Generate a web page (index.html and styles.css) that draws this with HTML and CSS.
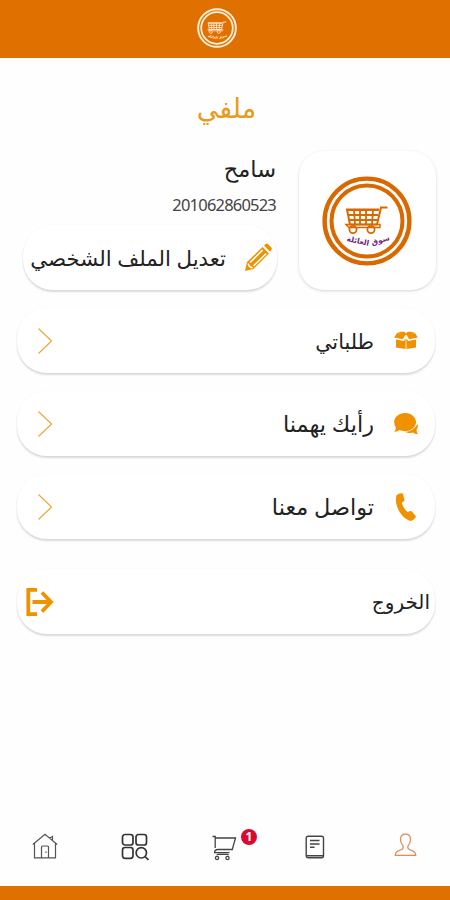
FILE: index.html
```
<!DOCTYPE html>
<html lang="ar" dir="rtl">
<head>
    <meta charset="UTF-8">
    <meta name="viewport" content="width=device-width, initial-scale=1.0">
    <title>ملفي</title>
    <link rel="stylesheet" href="styles.css">
</head>
<body>
    <svg class="defs">
        <symbol id="chevron" viewBox="0 0 16 28">
            <path d="M1.500 1.500l13 12.500-13 12.500" fill="none" stroke="currentColor" stroke-width="1.200"/>
        </symbol>
        <symbol id="logo" viewBox="0 0 90 90">
            <g fill="none" stroke="currentColor">
                <circle cx="45" cy="45" r="42.4" stroke-width="4.400"/>
                <circle cx="45" cy="45" r="35.5" stroke-width="4"/>
                <path d="M65.500 31.500h-6.500l-4 17H28l-3-15h32" stroke-width="2"/>
                <path d="M25 34h32M26 39h30M27 44h29M32 34l1 14M38 34v14M44 34v14M51 34l-1 14" stroke-width="1.800"/>
                <path d="M24 48.500h34v3H27z" stroke-width="1.500"/>
                <circle cx="31" cy="53.500" r="3.600" stroke-width="1.800"/>
                <circle cx="49" cy="53.500" r="3.600" stroke-width="1.800"/>
            </g>
        </symbol>
    </svg>

    <header class="topbar">
        <svg class="topbar-logo" viewBox="0 0 90 90">
            <use href="#logo"/>
            <g class="logo-text">
                <text x="59" y="66.500" transform="rotate(-16 59 66)">سوق</text>
                <text x="35.500" y="67.500" transform="rotate(12 35.500 67)">العائلة</text>
            </g>
        </svg>
    </header>

    <main class="page">
        <h1>ملفي</h1>

        <section class="profile">
            <div class="avatar">
                <svg viewBox="0 0 90 90">
                    <use href="#logo"/>
                    <g class="logo-text">
                        <text x="59" y="66.500" transform="rotate(-16 59 66)">سوق</text>
                        <text x="35.500" y="67.500" transform="rotate(12 35.500 67)">العائلة</text>
                    </g>
                </svg>
            </div>
            <div class="profile-info">
                <div class="name">سامح</div>
                <div class="phone">201062860523</div>
                <a class="card edit">
                    <svg class="pencil" viewBox="0 0 28 29">
                        <path d="M1 28l2-9L18.500 4l6.500 6.500L9.500 26z" fill="#f09100"/>
                        <path d="M20 2.500l1.500-1.500q1.500-1 3 .5l2.500 2.500q1.500 1.500.3 3L26 8.800z" fill="#f09100"/>
                        <path d="M6 19.500L18.700 7M9.500 23L22.200 10.500M4 20.500l1.500 3 3 1.500" fill="none" stroke="#fff" stroke-width="1.600"/>
                    </svg>
                    <span>تعديل الملف الشخصي</span>
                </a>
            </div>
        </section>

        <nav class="menu">
            <a class="card row">
                <svg class="row-icon" viewBox="0 0 24 28" fill="#f09100">
                    <path d="M3 6l8.500 1.200L9 12.300.2 10.500zM21 6l-8.500 1.200 2.500 5.100 8.800-1.800zM2 12.500l7.700 1.500 1.900-2.800v10.700L2 20.500zM22 12.500L14.300 14l-1.900-2.800v10.700l9.600-1.400z"/>
                    <path d="M3 6l4-1.200h3.500L12 6.500l1.500-1.700H17L21 6l-9 2.200z"/>
                </svg>
                <span class="orders">طلباتي</span>
                <svg class="arrow"><use href="#chevron"/></svg>
            </a>
            <a class="card row">
                <svg class="row-icon" viewBox="0 0 24 28" fill="#f09100">
                    <path d="M11 3c6.200 0 11 4 11 9s-4.800 9.200-11 9.200c-2 0-3.800-.5-5.400-1.200Q3.500 22 .3 21.800 2 19.800 1.800 17.200A8.500 8.500 0 0 1 .2 12C.2 7 5 3 11 3z"/>
                    <path d="M23.500 14q1 3-1 6 0 2.500 1.500 4-3 .2-5-1.600-5 1.200-8-.3Q19.500 21 23.500 14z"/>
                </svg>
                <span class="opinion">رأيك يهمنا</span>
                <svg class="arrow"><use href="#chevron"/></svg>
            </a>
            <a class="card row">
                <svg class="row-icon" viewBox="0 0 24 28" fill="#f09100">
                    <path d="M2.500 2.200Q5 0 7.800.3q1 0 1.300 1l1.300 5.500q.2 1-.6 1.500L7.700 9.700q1.500 5.500 5.800 9.300l2.700-1q1-.3 1.600.5l3.700 4.300q.7.900 0 1.700-2 3.200-5 3.400C9.500 26.500 2.500 17 2 8q-.2-4 .5-5.800z"/>
                </svg>
                <span class="contact">تواصل معنا</span>
                <svg class="arrow"><use href="#chevron"/></svg>
            </a>
            <a class="card row logout">
                <span>الخروج</span>
                <svg class="logout-icon" viewBox="0 0 28 30" fill="none" stroke="#f09100" stroke-width="3.800">
                    <path d="M11 2.800H2.300v24.400H11M6.500 15h18M16 5.500l9 9.500-9 9.500"/>
                </svg>
            </a>
        </nav>
    </main>

    <footer class="tabbar">
        <a class="tab">
            <svg class="person" viewBox="0 0 24 26" fill="none" stroke="#e08a5e" stroke-width="1.300">
                <path d="M12 1.200c3.500 0 5.200 2.300 5.200 5.500 0 2.800-1 5-2.600 6.600-.6 2.500-.3 3.200 1.500 3.900l4 1.600q2.300 1 2.600 4.400H1.300q.3-3.400 2.600-4.400l4-1.600c1.800-.7 2.100-1.400 1.500-3.900C7.800 11.700 6.800 9.500 6.800 6.700c0-3.200 1.700-5.500 5.200-5.500z"/>
            </svg>
        </a>
        <a class="tab">
            <svg class="doc" viewBox="0 0 20 24" fill="none" stroke="#444" stroke-width="1.400">
                <rect x="1.200" y="1.200" width="17.300" height="21.600" rx="2"/>
                <path d="M1.500 20.800h17M5 5.500h9.500M5 9h9.500M5 12.300h4.500"/>
            </svg>
        </a>
        <a class="tab">
            <svg class="cart" viewBox="0 0 26 26" fill="none" stroke="#444" stroke-width="1.300">
                <path d="M.5 1.500h2.700v11.500M3.500 3h20l-3.200 11.500H6q-3.500 0-3.500 3.200h15M5 20.300q0-1 1-1h9q1.500 0 1.500 1"/>
                <circle cx="5" cy="23" r="1.600"/>
                <circle cx="15.500" cy="23" r="1.600"/>
            </svg>
            <span class="badge">1</span>
        </a>
        <a class="tab">
            <svg class="grid" viewBox="0 0 28 28" fill="none" stroke="#333" stroke-width="1.700">
                <rect x="1.500" y="1.500" width="10.500" height="10.500" rx="2.500"/>
                <rect x="15" y="1.500" width="10.500" height="10.500" rx="2.500"/>
                <rect x="1.500" y="14.500" width="10.500" height="10.800" rx="2.500"/>
                <circle cx="20.300" cy="19.800" r="5.200"/>
                <path d="M24 23.500l3.500 3.500"/>
            </svg>
        </a>
        <a class="tab">
            <svg class="home" viewBox="0 0 26 26" fill="none" stroke="#555" stroke-width="1.200">
                <path d="M2.500 10.500v14.300h21V10.500M.8 11.500L13 1.200l12.200 10.300M17.500 5l3-1.500v4M9.500 24.500V14q0-1 1-1h5q1 0 1 1v10.500M14 18.500v1.500"/>
            </svg>
        </a>
    </footer>
</body>
</html>
```
FILE: styles.css
```
* {
    box-sizing: border-box;
}
body {
    margin: 0;
    height: 900px;
    display: flex;
    flex-direction: column;
    background: #fefefe;
    color: #222;
    font-family: "Noto Sans", "DejaVu Sans", sans-serif;
    font-size: 20px;
    overflow: hidden;
}
svg {
    display: block;
    flex-shrink: 0;
}
.defs {
    display: none;
}
.topbar {
    height: 58px;
    padding: 8px 16px 0 0;
    display: flex;
    justify-content: center;
    background: #e07000;
}
.topbar-logo {
    width: 40px;
    height: 40px;
    color: #fff0d8;
}
.logo-text {
    fill: #75257e;
    font-size: 7.5px;
    font-weight: bold;
    text-anchor: middle;
}
.topbar-logo .logo-text {
    fill: #fff0d8;
}
.page {
    flex: 1;
}
h1 {
    margin: 0;
    padding-top: 32px;
    padding-left: 3px;
    height: 93px;
    line-height: 36px;
    text-align: center;
    font-size: 27px;
    font-weight: normal;
    color: #e99a1c;
}
.profile {
    display: flex;
    gap: 22px;
    height: 157px;
    padding: 0 14px 0 23px;
}
.avatar {
    width: 137px;
    height: 139px;
    padding: 25px 24px;
    border-radius: 25px;
    background: #fff;
    box-shadow: 0 1px 3px rgba(0,0,0,0.17);
    color: #d96800;
}
.avatar svg {
    width: 90px;
    height: 90px;
}
.profile-info {
    width: 254px;
}
.name {
    height: 38px;
    padding-right: 1px;
    line-height: 36px;
    font-size: 22.5px;
}
.phone {
    height: 36px;
    padding-right: 1px;
    line-height: 31px;
    font-size: 16.5px;
    letter-spacing: -0.8px;
    color: #444;
}
.card {
    display: flex;
    align-items: center;
    height: 65px;
    border-radius: 30px;
    background: #fff;
    box-shadow: 0 2px 2px rgba(0,0,0,0.14), 0 0 2px rgba(0,0,0,0.04);
    white-space: nowrap;
}
.edit {
    gap: 18px;
    padding-right: 5px;
    font-size: 21.3px;
}
.pencil {
    width: 28px;
    height: 29px;
}
.menu {
    display: flex;
    flex-direction: column;
    gap: 18px;
    padding: 0 15px 0 17px;
}
.row {
    padding: 0 17px 0 20px;
    gap: 20px;
}
.row-icon {
    width: 24px;
    height: 28px;
}
.orders {
    font-size: 20.7px;
}
.opinion,
.contact {
    font-size: 22.4px;
}
.arrow {
    width: 16px;
    height: 28px;
    margin-right: auto;
    color: #e9a83c;
}
.logout {
    margin-top: 12px;
    padding: 0 5px 0 9px;
}
.logout-icon {
    width: 28px;
    height: 30px;
    margin-right: auto;
}
.tabbar {
    display: flex;
    height: 79px;
    border-bottom: 14px solid #e07000;
}
.tab {
    position: relative;
    flex: 1;
    padding-top: 12px;
    display: flex;
    justify-content: center;
}
.person {
    width: 23px;
    height: 25px;
}
.doc {
    width: 20px;
    height: 24px;
    margin-top: 2px;
}
.cart {
    width: 26px;
    height: 26px;
    margin-top: 2px;
}
.grid {
    width: 28px;
    height: 28px;
}
.home {
    width: 26px;
    height: 26px;
}
.badge {
    position: absolute;
    top: 8px;
    left: 61px;
    width: 16px;
    height: 16px;
    border-radius: 50%;
    background: #d80a30;
    color: #fff;
    font-size: 12px;
    font-weight: bold;
    line-height: 16px;
    text-align: center;
}
```
